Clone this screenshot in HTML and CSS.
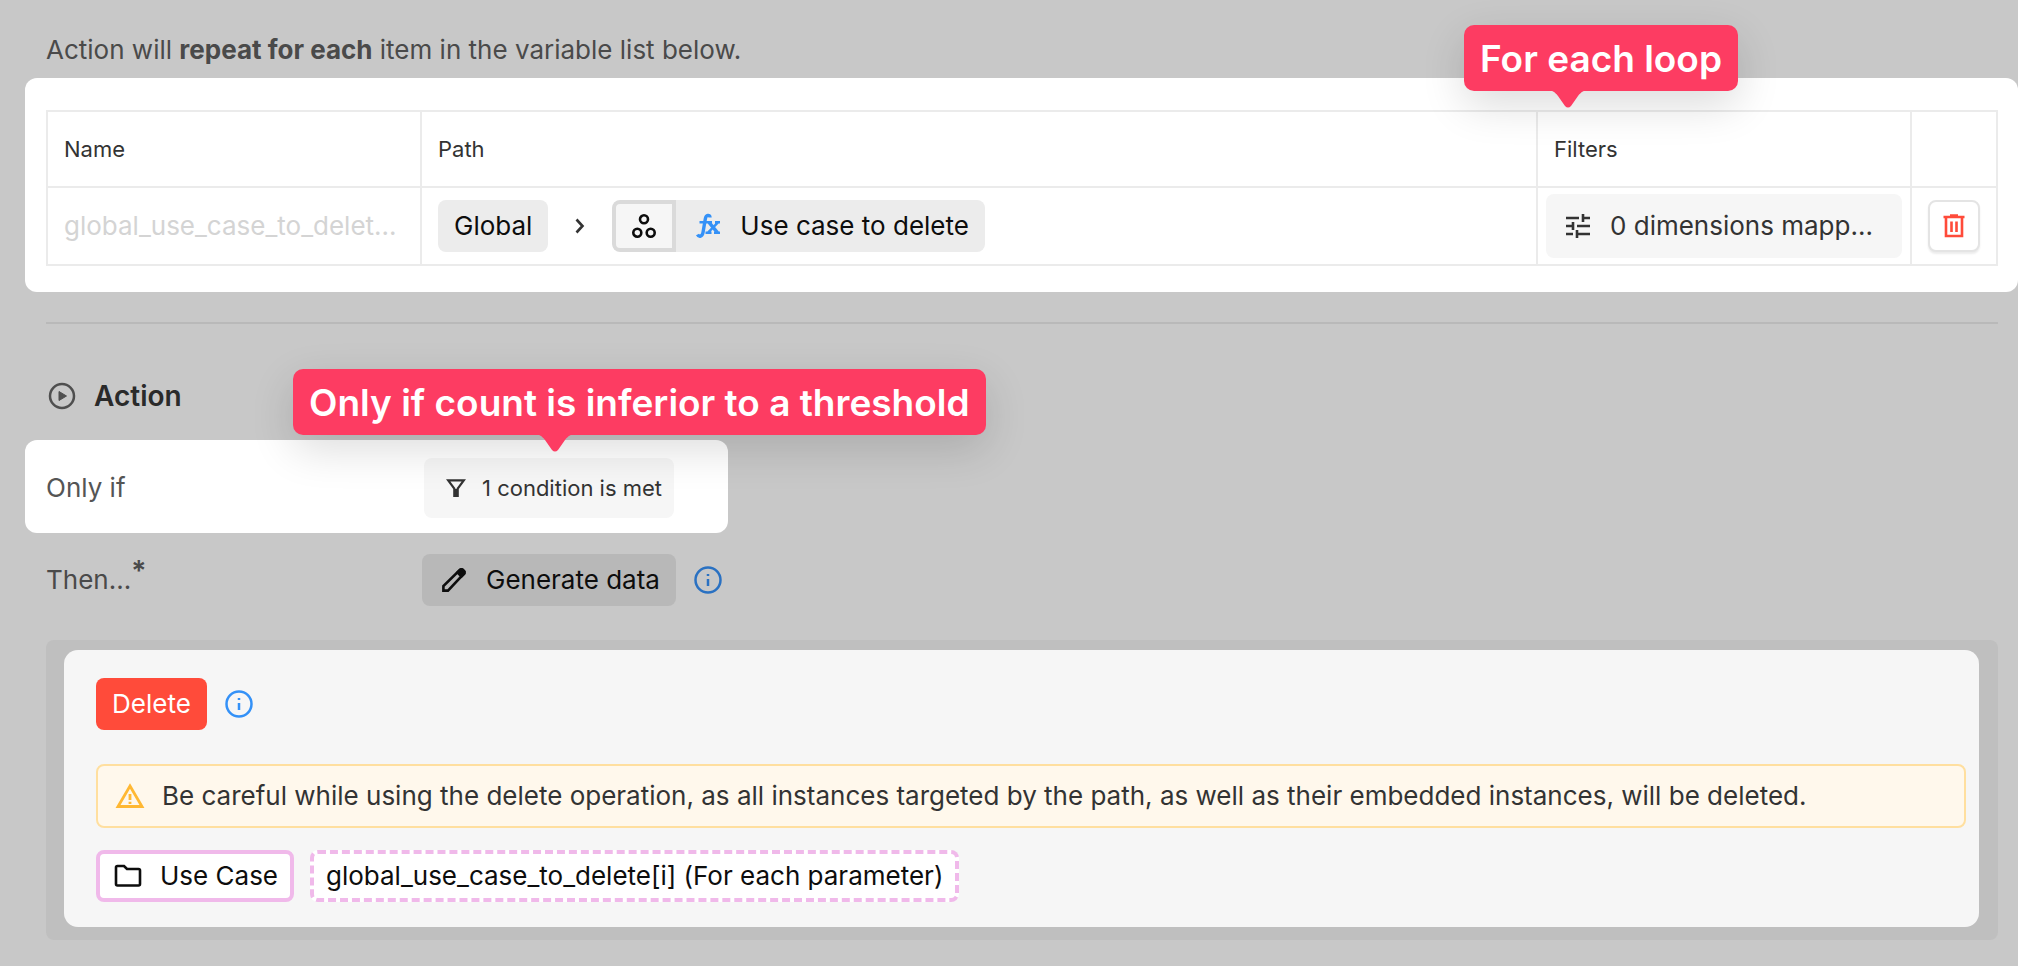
FILE: index.html
```html
<!DOCTYPE html>
<html lang="en">
<head>
<meta charset="utf-8">
<title>Action</title>
<link rel="stylesheet" href="styles.css">
</head>
<body>
<main class="page">
  <p class="intro">Action will <strong>repeat for each</strong> item in the variable list below.</p>

  <section class="spot spot-table">
    <div class="callout callout-loop">For each loop
      <svg class="callout-tip" viewBox="0 0 44 18" aria-hidden="true"><path d="M0 0H44C38 0 35 2 32 6L25 16Q22 19 19 16L12 6C9 2 6 0 0 0Z"/></svg>
    </div>
    <table class="vars">
      <colgroup><col class="col-side"><col><col class="col-side"><col class="col-tool"></colgroup>
      <thead>
        <tr><th scope="col">Name</th><th scope="col">Path</th><th scope="col">Filters</th><td></td></tr>
      </thead>
      <tbody>
        <tr>
          <td><span class="var-name">global_use_case_to_delet...</span></td>
          <td>
            <div class="path">
              <button type="button" class="chip">Global</button>
              <svg class="icon chevron" viewBox="0 0 24 24" aria-hidden="true"><path d="M8.500 5.500l6 6.500-6 6.500"/></svg>
              <button type="button" class="chip chip-split">
                <span class="chip-kind">
                  <svg class="icon" viewBox="0 0 24 24" aria-hidden="true"><circle cx="12" cy="5.300" r="4"/><circle cx="5.300" cy="18.700" r="4"/><circle cx="18.700" cy="18.700" r="4"/></svg>
                </span>
                <svg class="icon fx" viewBox="0 0 24 24" aria-hidden="true"><path class="fx-hook" d="M14 3.500C14 .5 10 .5 9.300 5L7 18.500C6.300 22.500 3 23.500 1.500 20.500"/><path d="M3.500 8.300H16M19 8.300h5M9.500 18.700h6M18 18.700h6M12 18.700l10-10.400"/><path class="fx-hook" d="M13 8.300l8.500 10.400"/></svg>
                <span>Use case to delete</span>
              </button>
            </div>
          </td>
          <td class="cell-filter">
            <button type="button" class="filter">
              <svg class="icon" viewBox="0 0 24 24" aria-hidden="true"><path d="M0 4h13M17 4h7M17 0v8M0 12h7M11 12h13M7 8v8M0 20h7M11 20h13M11 16v8"/></svg>
              <span>0 dimensions mapp...</span>
            </button>
          </td>
          <td class="cell-tool">
            <button type="button" class="trash" aria-label="Delete variable">
              <svg class="icon" viewBox="0 0 24 24" aria-hidden="true"><path d="M1.500 3h21M8 1.500h8M4 3v19h16V3M9.500 7.500v10.500M14.500 7.500v10.500"/></svg>
            </button>
          </td>
        </tr>
      </tbody>
    </table>
  </section>

  <hr class="rule">

  <h2 class="heading">
    <svg class="icon play" viewBox="0 0 28 28" aria-hidden="true"><circle cx="14" cy="14" r="12"/><path d="M11 9.500v9l7.500-4.500z"/></svg>
    Action
  </h2>

  <section class="spot spot-if">
    <span class="label">Only if</span>
    <button type="button" class="condition">
      <svg class="icon" viewBox="0 0 18 18" aria-hidden="true"><path d="M1.200 1.300h15.600L10.700 9.500V17H7.300V9.500z"/><path d="M9 10v6.500"/></svg>
      1 condition is met
    </button>
    <div class="callout callout-if">Only if count is inferior to a threshold
      <svg class="callout-tip" viewBox="0 0 44 18" aria-hidden="true"><path d="M0 0H44C38 0 35 2 32 6L25 16Q22 19 19 16L12 6C9 2 6 0 0 0Z"/></svg>
    </div>
  </section>

  <div class="then">
    <span class="label">Then...<span class="star">*</span></span>
    <button type="button" class="generate">
      <svg class="icon" viewBox="0 0 24 24" aria-hidden="true"><path d="M1.400 22.600v-4.600L18 1.800q1.500-1 2.700.2l1.200 1.200q1 1.200 0 2.500L6 22.600z"/><path d="M15.500 4.500l3-3h2l2 2v2l-3 3z" fill="currentColor"/></svg>
      Generate data
    </button>
    <svg class="icon info info-dim" viewBox="0 0 28 28" aria-hidden="true"><circle cx="14" cy="14" r="12.500"/><path d="M14 13v7M14 8v2"/></svg>
  </div>

  <div class="frame">
    <section class="card">
      <div class="card-head">
        <button type="button" class="delete">Delete</button>
        <svg class="icon info" viewBox="0 0 28 28" aria-hidden="true"><circle cx="14" cy="14" r="12.500"/><path d="M14 13v7M14 8v2"/></svg>
      </div>
      <p class="warning">
        <svg class="icon warn" viewBox="0 0 28 24" aria-hidden="true"><path d="M14 2L26 22.500H2z"/><path d="M14 10v6M14 17.700v2.300"/></svg>
        Be careful while using the delete operation, as all instances targeted by the path, as well as their embedded instances, will be deleted.
      </p>
      <div class="targets">
        <button type="button" class="target target-folder">
          <svg class="icon folder" viewBox="0 0 28 24" aria-hidden="true"><path d="M2 3.500Q2 2 3.500 2H10l3 3H24.500Q26 5 26 6.500V20Q26 21.500 24.500 21.500H3.500Q2 21.500 2 20z"/></svg>
          Use Case
        </button>
        <button type="button" class="target target-param">global_use_case_to_delete[i] (For each parameter)</button>
      </div>
    </section>
  </div>
</main>
</body>
</html>
```
FILE: styles.css
```css
* { box-sizing: border-box; }
body {
  margin: 0;
  background: #c8c8c8;
  color: #333;
  font: 26px/32px Inter, "Liberation Sans", sans-serif;
}
button {
  display: inline-flex;
  align-items: center;
  margin: 0;
  border: 0;
  font: inherit;
  color: #0d0d0d;
  white-space: nowrap;
  cursor: pointer;
}
.icon {
  flex: none;
  width: 24px;
  height: 24px;
  fill: none;
  stroke: currentColor;
  stroke-width: 2.6;
  overflow: visible;
}
.page { padding-bottom: 26px; }
.intro { margin: 0; padding: 34px 20px 12px 46px; color: #4a4a4a; }
.intro strong { font-weight: 700; }

.spot { position: relative; margin-left: 25px; background: #fff; border-radius: 12px; }
.spot-table { padding: 32px 20px 26px 21px; }

.vars { width: 100%; table-layout: fixed; border-collapse: collapse; }
.vars th, .vars td { border: 2px solid #ebebeb; padding: 0 16px; text-align: left; }
.vars thead tr { height: 76px; }
.vars tbody tr { height: 78px; }
.vars th { font-size: 22px; font-weight: 400; }
.col-side { width: 374px; }
.col-tool { width: 86px; }
.vars .cell-filter { padding: 0 8px; }
.vars .cell-tool { padding: 0 16px; }
.var-name { display: block; color: #d4d4d4; white-space: nowrap; }

.path { display: flex; align-items: center; }
.chip { height: 52px; padding: 0 16px; background: #ececec; border-radius: 8px; }
.chevron { margin: 0 20px; color: #333; }
.chip-split { padding: 0 16px 0 0; gap: 20px; overflow: hidden; }
.chip-kind {
  display: flex;
  align-items: center;
  justify-content: center;
  width: 64px;
  height: 52px;
  border: 4px solid #dadada;
  border-radius: 8px 0 0 8px;
  background: #f6f6f6;
}
.fx { color: #3491f7; stroke-width: 2.4; }
.fx-hook { stroke-width: 3.4; }
.filter {
  width: 100%;
  height: 64px;
  padding: 0 20px;
  gap: 20px;
  background: #f6f6f6;
  border-radius: 8px;
  color: #333;
}
.trash {
  justify-content: center;
  width: 52px;
  height: 52px;
  padding: 0;
  border: 2px solid #e4e4e4;
  border-radius: 8px;
  background: #fff;
  box-shadow: 0 2px 2px #ececec;
  color: #ff4b3a;
}

.callout {
  position: absolute;
  z-index: 1;
  padding: 10px 16px 8px;
  border-radius: 10px;
  background: #fd3c62;
  color: #fff;
  font-size: 37px;
  font-weight: 600;
  line-height: 48px;
  white-space: nowrap;
  box-shadow: 0 14px 44px rgba(0, 0, 0, .14);
}
.callout-tip { position: absolute; top: 100%; width: 44px; height: 18px; margin-top: -1px; fill: #fd3c62; }
.callout-loop { top: -53px; right: 280px; }
.callout-loop .callout-tip { left: 82px; }
.callout-if { top: -71px; left: 268px; }
.callout-if .callout-tip { left: 240px; }

.rule { height: 2px; margin: 30px 20px 0 46px; border: 0; background: #b9b9b9; }
.heading {
  display: flex;
  align-items: center;
  gap: 18px;
  margin: 0;
  padding: 54px 0 26px 48px;
  font-size: 28px;
  line-height: 36px;
  font-weight: 600;
  color: #2a2a2a;
}
.play { width: 28px; height: 28px; color: #4f4f4f; stroke-width: 2.5; }
.play path { fill: currentColor; stroke-width: 1; }

.label { flex: none; width: 376px; color: #555; }
.spot-if { display: flex; align-items: center; width: 703px; height: 93px; padding: 2px 0 0 21px; }
.spot-if .label { width: 378px; }
.condition {
  height: 60px;
  padding: 0 12px 0 23px;
  gap: 17px;
  border-radius: 8px;
  background: #f6f6f6;
  font-size: 22px;
  color: #333;
}
.condition .icon { width: 18px; height: 18px; stroke-width: 2.2; }

.then { display: flex; align-items: center; padding: 21px 0 34px 46px; }
.then .label { color: #4a4a4a; }
.star { position: relative; top: -8px; font-size: 28px; line-height: 0; font-weight: 600; }
.generate { height: 52px; padding: 0 16px 0 20px; gap: 20px; border-radius: 8px; background: #b8b8b8; }
.info { width: 28px; height: 28px; margin-left: 18px; color: #3491f7; stroke-width: 2.5; }
.info-dim { color: #2a71c2; }

.frame { margin: 0 20px 0 46px; padding: 10px 19px 13px 18px; border-radius: 8px; background: #bfbfbf; }
.card { padding: 28px 13px 25px 32px; border-radius: 14px; background: #f6f6f6; }
.card-head { display: flex; align-items: center; }
.delete { height: 52px; padding: 0 16px; border-radius: 8px; background: #ff4b3a; color: #fff; }
.warning {
  display: flex;
  align-items: center;
  gap: 18px;
  height: 64px;
  margin: 34px 0 22px;
  padding: 0 18px;
  border: 2px solid #ffdf9f;
  border-radius: 8px;
  background: #fff8ec;
}
.warn { width: 28px; color: #ffb833; stroke-width: 2.8; }
.targets { display: flex; gap: 16px; }
.target {
  height: 52px;
  padding: 0 12px;
  gap: 18px;
  border: 4px solid #f0b9ea;
  border-radius: 8px;
  background: #fff;
}
.target-folder { padding-left: 14px; }
.target-param { border-style: dashed; }
.folder { width: 28px; }
```
